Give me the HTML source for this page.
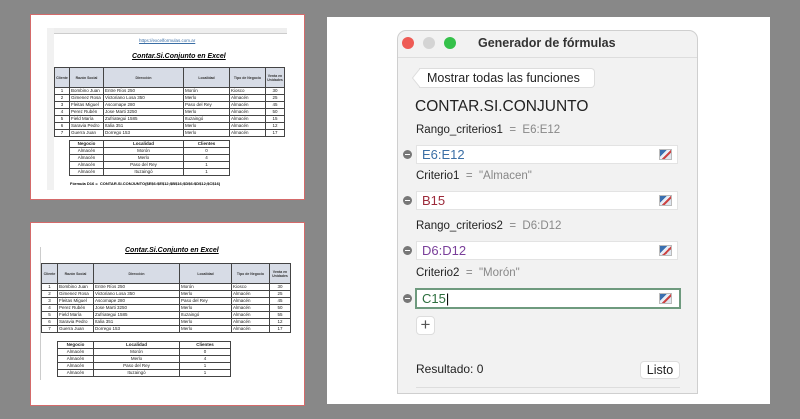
<!DOCTYPE html>
<html><head><meta charset="utf-8"><style>
*{margin:0;padding:0;box-sizing:border-box}
body{width:800px;height:419px;background:#888;position:relative;overflow:hidden;font-family:"Liberation Sans",sans-serif}
.a{position:absolute}
.img{position:absolute;background:#fff;border:1.5px solid #d46a6a}
.t{position:absolute;white-space:nowrap;line-height:1}
table{border-collapse:collapse;position:absolute;font-size:4.5px;font-family:"Liberation Sans",sans-serif}
td{border:0.7px solid #444;padding:0 1px;height:6.6px;line-height:6px;white-space:nowrap;overflow:hidden;color:#222}
th{border:0.7px solid #444;background:#d7dce6;font-weight:bold;font-size:3.5px;color:#333}
.c{text-align:center}
.dlg{position:absolute;left:397px;top:30px;width:301px;height:364px;background:#f2f2f2;border:1px solid #cfcfcf;border-radius:9px 9px 0 0}
.inp{position:absolute;left:416px;width:262px;height:19px;background:#fff;border:1px solid #e3e3e3;font-size:13px;line-height:17px;padding-left:5px}
.min{position:absolute;left:403px;width:9px;height:9px;border-radius:50%;background:#777}
.min:after{content:"";position:absolute;left:2px;top:4px;width:5px;height:1px;background:#fff}
.ic{position:absolute;left:659px;width:13px;height:11px;background:linear-gradient(135deg,#3a6fb0 0 35%,#e8eef6 35% 55%,#c44 55% 70%,#dfe6ef 70%);border:1px solid #bbb}
.lbl{position:absolute;left:416px;font-size:11.5px;color:#222;white-space:nowrap;line-height:1}
.lbl span{color:#888}
</style></head><body>

<div class="img" style="left:30px;top:14px;width:275px;height:186px"></div>
<div class="a" style="left:47px;top:28px;width:240px;height:6px;background:#eee;border-bottom:0.5px solid #ccc"></div>
<div class="a" style="left:47px;top:28px;width:7px;height:162px;background:#f1f1f1"></div>
<div class="t" style="left:139px;top:39px;font-size:4.5px;color:#3a6ea5;text-decoration:underline">https://excelformulas.com.ar</div>
<div class="t" style="left:132px;top:53px;font-size:7px;font-weight:bold;font-style:italic;text-decoration:underline">Contar.Si.Conjunto en Excel</div>
<table style="left:54px;top:67px;width:231px">
<tr style="height:20px"><th style="width:15px">Cliente</th><th style="width:34px">Razón Social</th><th style="width:80px">Dirección</th><th style="width:46px">Localidad</th><th style="width:36px">Tipo de Negocio</th><th>Venta en Unidades</th></tr>
<tr><td class="c">1</td><td>Bombino Juan</td><td>Entre Ríos 250</td><td>Morón</td><td>Kiosco</td><td class="c">30</td></tr>
<tr><td class="c">2</td><td>Gimenez Rosa</td><td>Victoriano Losa 350</td><td>Merlo</td><td>Almacén</td><td class="c">25</td></tr>
<tr><td class="c">3</td><td>Fleitas Miguel</td><td>Ascomape 280</td><td>Paso del Rey</td><td>Almacén</td><td class="c">45</td></tr>
<tr><td class="c">4</td><td>Perez Rubén</td><td>Jose Marti 3250</td><td>Merlo</td><td>Almacén</td><td class="c">50</td></tr>
<tr><td class="c">5</td><td>Field María</td><td>Zufriategui 1585</td><td>Ituzaingó</td><td>Almacén</td><td class="c">15</td></tr>
<tr><td class="c">6</td><td>Saravia Pedro</td><td>Italia 351</td><td>Merlo</td><td>Almacén</td><td class="c">12</td></tr>
<tr><td class="c">7</td><td>Guerra Juan</td><td>Dorrego 153</td><td>Merlo</td><td>Almacén</td><td class="c">17</td></tr>
</table>
<table style="left:69px;top:140px;width:161px">
<tr><td class="c" style="width:34px;font-weight:bold">Negocio</td><td class="c" style="width:80px;font-weight:bold">Localidad</td><td class="c" style="font-weight:bold">Clientes</td></tr>
<tr><td class="c">Almacén</td><td class="c">Morón</td><td class="c">0</td></tr>
<tr><td class="c">Almacén</td><td class="c">Merlo</td><td class="c">4</td></tr>
<tr><td class="c">Almacén</td><td class="c">Paso del Rey</td><td class="c">1</td></tr>
<tr><td class="c">Almacén</td><td class="c">Ituzaingó</td><td class="c">1</td></tr>
</table>
<div class="t" style="left:70px;top:182px;font-size:4px;font-weight:bold">Fórmula D16 =&nbsp; CONTAR.SI.CONJUNTO($E$6:$E$12;$B$16;$D$6:$D$12;$C$16)</div>

<div class="img" style="left:30px;top:222px;width:275px;height:184px"></div>
<div class="a" style="left:40px;top:247px;width:1px;height:133px;background:#ccc"></div>
<div class="t" style="left:125px;top:247px;font-size:7px;font-weight:bold;font-style:italic;text-decoration:underline">Contar.Si.Conjunto en Excel</div>
<table style="left:41px;top:263px;width:250px">
<tr style="height:20px"><th style="width:16px">Cliente</th><th style="width:36px">Razón Social</th><th style="width:86px">Dirección</th><th style="width:52px">Localidad</th><th style="width:38px">Tipo de Negocio</th><th>Venta en Unidades</th></tr>
<tr><td class="c">1</td><td>Bombino Juan</td><td>Entre Ríos 250</td><td>Morón</td><td>Kiosco</td><td class="c">30</td></tr>
<tr><td class="c">2</td><td>Gimenez Rosa</td><td>Victoriano Losa 350</td><td>Merlo</td><td>Almacén</td><td class="c">25</td></tr>
<tr><td class="c">3</td><td>Fleitas Miguel</td><td>Ascomape 280</td><td>Paso del Rey</td><td>Almacén</td><td class="c">45</td></tr>
<tr><td class="c">4</td><td>Perez Rubén</td><td>Jose Marti 3250</td><td>Merlo</td><td>Almacén</td><td class="c">50</td></tr>
<tr><td class="c">5</td><td>Field María</td><td>Zufriategui 1585</td><td>Ituzaingó</td><td>Almacén</td><td class="c">55</td></tr>
<tr><td class="c">6</td><td>Saravia Pedro</td><td>Italia 351</td><td>Merlo</td><td>Almacén</td><td class="c">12</td></tr>
<tr><td class="c">7</td><td>Guerra Juan</td><td>Dorrego 153</td><td>Merlo</td><td>Almacén</td><td class="c">17</td></tr>
</table>
<table style="left:57px;top:341px;width:174px">
<tr><td class="c" style="width:36px;font-weight:bold">Negocio</td><td class="c" style="width:86px;font-weight:bold">Localidad</td><td class="c" style="font-weight:bold">Clientes</td></tr>
<tr><td class="c">Almacén</td><td class="c">Morón</td><td class="c">0</td></tr>
<tr><td class="c">Almacén</td><td class="c">Merlo</td><td class="c">4</td></tr>
<tr><td class="c">Almacén</td><td class="c">Paso del Rey</td><td class="c">1</td></tr>
<tr><td class="c">Almacén</td><td class="c">Ituzaingó</td><td class="c">1</td></tr>
</table>

<div class="a" style="left:327px;top:17px;width:443px;height:387px;background:#fff"></div>
<div class="dlg"></div>
<div class="a" style="left:398px;top:57px;width:299px;height:1px;background:#ddd"></div>
<div class="a" style="left:402px;top:37px;width:12px;height:12px;border-radius:50%;background:#ee5b55"></div>
<div class="a" style="left:423px;top:37px;width:12px;height:12px;border-radius:50%;background:#d4d4d4"></div>
<div class="a" style="left:444px;top:37px;width:12px;height:12px;border-radius:50%;background:#35c14a"></div>
<div class="t" style="left:478px;top:37px;font-size:12.5px;font-weight:bold;color:#333">Generador de fórmulas</div>
<div class="a" style="left:419px;top:68px;width:176px;height:20px;background:#fff;border:1px solid #ddd;border-left:none;border-radius:0 4px 4px 0"></div>
<svg class="a" style="left:412px;top:68px" width="9" height="20"><path d="M8.5 0 L0.5 10 L8.5 20" fill="#fff" stroke="#ddd"/></svg>
<div class="t" style="left:427px;top:72px;font-size:12.5px;color:#222">Mostrar todas las funciones</div>
<div class="t" style="left:415px;top:99px;font-size:15.5px;color:#222">CONTAR.SI.CONJUNTO</div>

<div class="lbl" style="top:125px">Rango_criterios1 &nbsp;<span>= &nbsp;E6:E12</span></div>
<div class="min" style="top:150px"></div>
<div class="inp" style="top:145px;color:#3a6ea5">E6:E12</div><div class="ic" style="top:149px"></div>

<div class="lbl" style="top:171px">Criterio1 &nbsp;<span>= &nbsp;"Almacen"</span></div>
<div class="min" style="top:196px"></div>
<div class="inp" style="top:191px;color:#9c2a3a">B15</div><div class="ic" style="top:195px"></div>

<div class="lbl" style="top:221px">Rango_criterios2 &nbsp;<span>= &nbsp;D6:D12</span></div>
<div class="min" style="top:246px"></div>
<div class="inp" style="top:241px;color:#7a3f9a">D6:D12</div><div class="ic" style="top:245px"></div>

<div class="lbl" style="top:268px">Criterio2 &nbsp;<span>= &nbsp;"Morón"</span></div>
<div class="min" style="top:294px"></div>
<div class="inp" style="top:288px;left:415px;width:266px;height:21px;border:2px solid #6e9a7e;color:#2c6e3d">C15<span style="color:#000">|</span></div><div class="ic" style="top:293px"></div>

<div class="a" style="left:416px;top:316px;width:19px;height:19px;background:#fff;border:1px solid #ddd;border-radius:4px;font-size:17px;line-height:16px;text-align:center;color:#555">+</div>
<div class="t" style="left:416px;top:363px;font-size:12px;color:#222">Resultado: 0</div>
<div class="a" style="left:640px;top:361px;width:40px;height:18px;background:#fff;border:1px solid #ddd;border-radius:4px;font-size:12.5px;text-align:center;line-height:16px;color:#222">Listo</div>
<div class="a" style="left:416px;top:387px;width:264px;height:1px;background:#ddd"></div>
</body></html>
